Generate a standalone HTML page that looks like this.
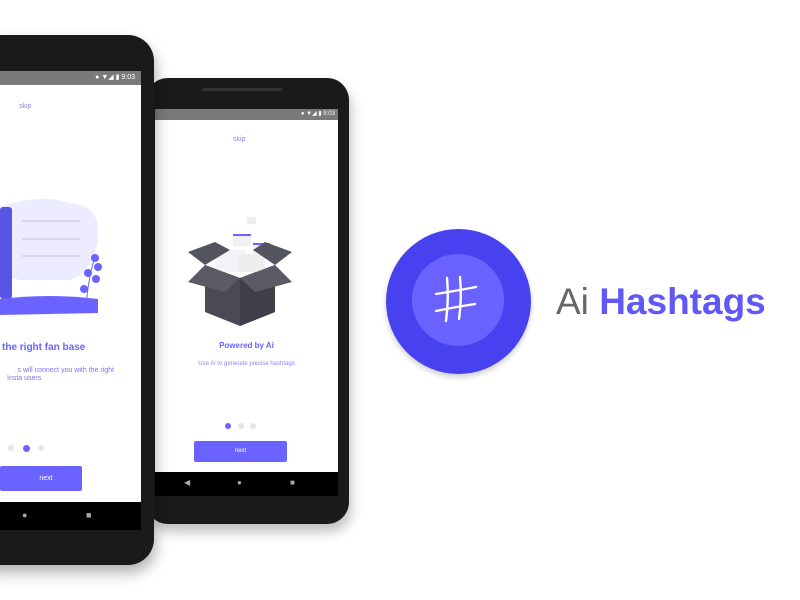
<!DOCTYPE html>
<html><head><style>
body{margin:0;width:800px;height:600px;background:#fff;position:relative;overflow:hidden;font-family:"Liberation Sans",sans-serif}
.a{position:absolute}
</style></head><body>
<!-- back phone -->
<div class="a" style="left:146px;top:78px;width:203px;height:446px;background:#1a1a1a;border-radius:22px;box-shadow:2px 8px 12px rgba(0,0,0,.25)"></div>
<div class="a" style="left:202px;top:88px;width:80px;height:3px;background:#333;border-radius:2px"></div>
<div class="a" style="left:155px;top:109px;width:183px;height:11px;background:#7a7a7a;color:#fff;font-size:6px;text-align:right;line-height:11px;padding-right:3px;box-sizing:border-box">● ▼◢ ▮ 9:03</div>
<div class="a" style="left:155px;top:120px;width:183px;height:352px;background:#fff"></div>
<div class="a" style="left:155px;top:472px;width:183px;height:24px;background:#000;color:#aaa;font-size:8px;line-height:22px"><span style="position:absolute;left:29px">◀</span><span style="position:absolute;left:82px">●</span><span style="position:absolute;left:135px">■</span></div>
<div class="a" style="left:233px;top:136px;font-size:7px;color:#8b86f7">skip</div>
<svg class="a" style="left:185px;top:210px" width="110" height="120" viewBox="0 0 110 120">
<rect x="62" y="7" width="9" height="7" fill="#eee"/>
<polygon points="20,55 55,68 90,55 90,102 55,116 20,102" fill="#4a4a56"/>
<polygon points="55,68 90,55 90,102 55,116" fill="#3f3f4a"/>
<rect x="30" y="40" width="30" height="22" fill="#f2f2f7"/><rect x="52" y="44" width="28" height="18" fill="#eee"/>
<rect x="48" y="24" width="18" height="12" fill="#f0f0f5"/><rect x="48" y="24" width="18" height="2" fill="#6a63ff"/>
<rect x="68" y="33" width="17" height="12" fill="#f0f0f5"/><rect x="68" y="33" width="17" height="2" fill="#6a63ff"/>
<polygon points="3,42 30,32 45,40 20,55" fill="#55555f"/>
<polygon points="107,42 80,32 68,40 90,55" fill="#55555f"/>
<polygon points="20,55 3,72 40,82 55,68" fill="#5b5b66"/><polygon points="90,55 107,72 70,82 55,68" fill="#5b5b66"/>
</svg>
<div class="a" style="left:155px;top:341px;width:183px;text-align:center;font-size:8px;font-weight:bold;color:#6a63ff">Powered by Ai</div>
<div class="a" style="left:155px;top:361px;width:183px;text-align:center;font-size:6px;color:#8b86f7">Use Ai to generate precise hashtags</div>
<div class="a" style="left:225px;top:423px;width:6px;height:6px;border-radius:50%;background:#6a63ff"></div>
<div class="a" style="left:238px;top:423px;width:6px;height:6px;border-radius:50%;background:#e6e6e6"></div>
<div class="a" style="left:250px;top:423px;width:6px;height:6px;border-radius:50%;background:#e6e6e6"></div>
<div class="a" style="left:194px;top:441px;width:93px;height:21px;background:#6a63ff;border-radius:2px;color:#fff;font-size:6px;text-align:center;line-height:21px">next</div>
<!-- front phone -->
<div class="a" style="left:-30px;top:35px;width:184px;height:530px;background:#1a1a1a;border-radius:26px;box-shadow:2px 8px 14px rgba(0,0,0,.3)"></div>
<div class="a" style="left:0;top:71px;width:141px;height:14px;background:#7a7a7a;color:#fff;font-size:7px;text-align:right;line-height:14px;padding-right:6px;box-sizing:border-box">● ▼◢ ▮ 9:03</div>
<div class="a" style="left:0;top:85px;width:141px;height:417px;background:#fff"></div>
<div class="a" style="left:0;top:502px;width:141px;height:28px;background:#000;color:#aaa;font-size:9px"><span style="position:absolute;left:22px;top:8px">●</span><span style="position:absolute;left:86px;top:8px">■</span></div>
<div class="a" style="left:19px;top:103px;font-size:7px;color:#8b86f7">skip</div>
<svg class="a" style="left:0;top:195px" width="105" height="125" viewBox="0 0 105 125">
<path d="M0,12 Q40,-2 70,8 Q100,10 98,40 Q96,75 70,85 L20,85 L0,80Z" fill="#ecebff"/>
<rect x="0" y="12" width="12" height="92" rx="3" fill="#5a54e6"/>
<rect x="22" y="25" width="58" height="2" fill="#d6d4f5"/><rect x="22" y="43" width="58" height="2" fill="#d6d4f5"/><rect x="22" y="60" width="58" height="2" fill="#d6d4f5"/>
<path d="M0,104 Q50,98 98,104 L98,118 L0,120Z" fill="#6a63ff"/>
<path d="M86,112 Q88,85 94,65" stroke="#6a63ff" fill="none"/>
<circle cx="95" cy="63" r="4" fill="#6a63ff"/><circle cx="98" cy="72" r="4" fill="#6a63ff"/><circle cx="88" cy="78" r="4" fill="#6a63ff"/><circle cx="96" cy="84" r="4" fill="#6a63ff"/><circle cx="84" cy="94" r="4" fill="#6a63ff"/>
</svg>
<div class="a" style="left:2px;top:342px;font-size:10px;font-weight:bold;color:#6a63ff">the right fan base</div>
<div class="a" style="left:0;top:366px;width:114px;text-align:right;font-size:7px;color:#7a74f0;line-height:9px">s will connect you with the right</div>
<div class="a" style="left:7px;top:375px;font-size:7px;color:#7a74f0">Insta users</div>
<div class="a" style="left:8px;top:445px;width:6px;height:6px;border-radius:50%;background:#e6e6e6"></div>
<div class="a" style="left:23px;top:445px;width:7px;height:7px;border-radius:50%;background:#6a63ff"></div>
<div class="a" style="left:38px;top:445px;width:6px;height:6px;border-radius:50%;background:#e6e6e6"></div>
<div class="a" style="left:0;top:466px;width:82px;height:25px;background:#6a63ff;border-radius:2px;color:#fff;font-size:7px;text-align:center;line-height:25px;padding-left:10px;box-sizing:border-box">next</div>
<!-- logo -->
<div class="a" style="left:386px;top:229px;width:145px;height:145px;border-radius:50%;background:#4841f0;box-shadow:0 3px 6px rgba(0,0,0,.2)"></div>
<div class="a" style="left:412px;top:254px;width:92px;height:92px;border-radius:50%;background:#6962ff"></div>
<svg class="a" style="left:430px;top:273px" width="55" height="55" viewBox="0 0 55 55">
<g stroke="#fff" stroke-width="2.4" stroke-linecap="round" fill="none">
<path d="M17,5 Q19,25 16,48"/><path d="M30,4 Q32,25 29,46"/><path d="M6,21 Q25,18 46,14"/><path d="M6,38 Q25,34 45,31"/></g></svg>
<div class="a" style="left:556px;top:281px;font-size:37px;white-space:nowrap;color:#666">Ai <b style="color:#5f58f6">Hashtags</b></div>
</body></html>
